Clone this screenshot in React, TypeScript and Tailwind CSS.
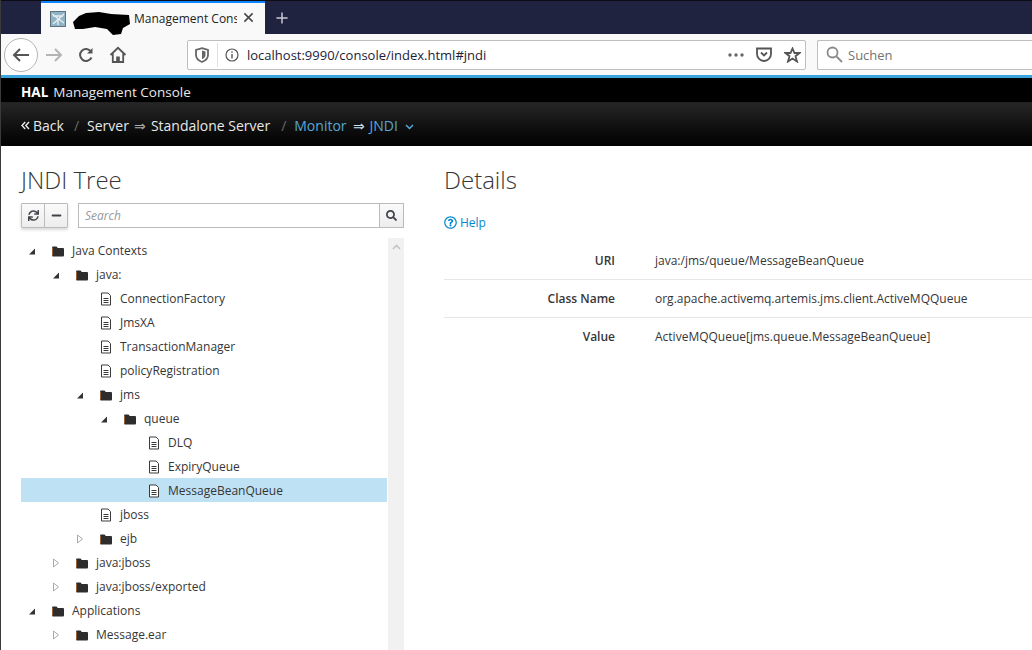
import React from "react";
import { FaSync, FaMinus, FaSearch, FaRegQuestionCircle } from "react-icons/fa";

function Tri({ open }: { open: boolean }) {
  return (
    <svg width="8" height="10" viewBox="0 0 8 10" className="shrink-0">
      {open ? <path d="M7 2.5V8.5H1Z" fill="#333" /> : <path d="M1.5 1V9L6.5 5Z" fill="#fff" stroke="#aaa" />}
    </svg>
  );
}

function Doc() {
  return (
    <svg width="12" height="14" viewBox="0 0 12 14" className="shrink-0" fill="none" stroke="#3a3a3a" strokeWidth="1">
      <path d="M1.5 1H8L10.5 3.5V13H1.5Z" fill="#fff" />
      <path d="M3.5 6.5H8.5M3.5 8.5H8.5M3.5 10.5H8.5" />
    </svg>
  );
}

function Folder() {
  return (
    <svg width="12" height="11" viewBox="0 0 12 11" className="shrink-0">
      <path d="M1 0.5H4.5L5.8 2H11Q12 2 12 3V9.5Q12 10.5 11 10.5H1Q0 10.5 0 9.5V1.5Q0 0.5 1 0.5Z" fill="#2d2d2d" />
      <path d="M0.4 1.5V9.5" stroke="#c97c3a" strokeWidth="0.8" />
    </svg>
  );
}

type Row = { t: string; d: number; k: "o" | "c" | "f"; sel?: boolean };
const rows: Row[] = [
  { t: "Java Contexts", d: 0, k: "o" },
  { t: "java:", d: 1, k: "o" },
  { t: "ConnectionFactory", d: 2, k: "f" },
  { t: "JmsXA", d: 2, k: "f" },
  { t: "TransactionManager", d: 2, k: "f" },
  { t: "policyRegistration", d: 2, k: "f" },
  { t: "jms", d: 2, k: "o" },
  { t: "queue", d: 3, k: "o" },
  { t: "DLQ", d: 4, k: "f" },
  { t: "ExpiryQueue", d: 4, k: "f" },
  { t: "MessageBeanQueue", d: 4, k: "f", sel: true },
  { t: "jboss", d: 2, k: "f" },
  { t: "ejb", d: 2, k: "c" },
  { t: "java:jboss", d: 1, k: "c" },
  { t: "java:jboss/exported", d: 1, k: "c" },
  { t: "Applications", d: 0, k: "o" },
  { t: "Message.ear", d: 1, k: "c" },
];

const pads: Record<number, string> = { 0: "pl-[7px]", 1: "pl-[31px]", 2: "pl-[55px]", 3: "pl-[79px]", 4: "pl-[103px]" };

function TreeRow({ r }: { r: Row }) {
  return (
    <div className={`h-6 pt-[2px] flex items-center shrink-0 text-[12px] text-[#363636] ${pads[r.d]} ${r.sel ? "bg-[#bee1f4]" : ""}`}>
      <span className="w-[8px] mr-[16px] flex items-center">
        {r.k === "f" ? null : <Tri open={r.k === "o"} />}
      </span>
      {r.k === "f" ? <Doc /> : <Folder />}
      <span className="ml-[8px]">{r.t}</span>
    </div>
  );
}

function Detail({ k, v, border }: { k: string; v: string; border?: boolean }) {
  return (
    <div className={`h-[38px] flex items-center text-[12px] text-[#363636] ${border ? "border-b border-[#e7e7e7]" : ""}`}>
      <div className="w-[171px] text-right font-semibold">{k}</div>
      <div className="ml-[40px] whitespace-nowrap">{v}</div>
    </div>
  );
}

export default function App() {
  return (
    <div className="w-[1032px] h-[650px] overflow-hidden bg-white border-l border-[#3a3a3a] flex flex-col font-['Open_Sans',sans-serif]">
      {/* Tab strip */}
      <div className="h-[34px] shrink-0 bg-[#202340] border-t border-[#0c0c14] flex pl-[40px]">
        <div className="w-[224px] h-full bg-[#f9f9fa] border-t-2 border-[#0a84ff] flex items-center relative pl-[9px]">
          <svg width="16" height="16" viewBox="0 0 16 16" className="shrink-0">
            <rect x="0.5" y="0.5" width="15" height="15" fill="#8fb4c6" stroke="#5d7480" />
            <path d="M2 3L14 12M14 3L3 13M8 7V14M3 5H13" stroke="#e8eef0" strokeWidth="1.4" fill="none" />
          </svg>
          <svg width="60" height="26" viewBox="0 0 60 26" className="absolute left-[30px] top-[7px]">
            <path d="M2 12L8 6L15 3L28 2L40 4L58 5L59 14L52 18L50 24L42 25L36 19L24 17L12 19L4 19Z" fill="#000" />
          </svg>
          <span className="absolute left-[93px] text-[12px] text-[#222] w-[103px] overflow-hidden whitespace-nowrap">Management Console</span>
          <svg width="11" height="11" viewBox="0 0 12 12" className="absolute left-[202px] top-[9px]" stroke="#444" strokeWidth="1.6">
            <path d="M1.5 1.5L10.5 10.5M10.5 1.5L1.5 10.5" />
          </svg>
        </div>
        <div className="ml-[11px] flex items-center">
          <svg width="12" height="12" viewBox="0 0 14 14" stroke="#c9cbd6" strokeWidth="1.7">
            <path d="M7 0.5V13.5M0.5 7H13.5" />
          </svg>
        </div>
      </div>

      {/* Browser toolbar */}
      <div className="h-[41px] shrink-0 bg-[#f9f9fa] flex items-center pl-[3px]">
        <div className="w-[34px] h-[34px] rounded-full border border-[#b5b5b5] bg-white flex items-center justify-center">
          <svg width="18" height="16" viewBox="0 0 18 16" fill="none" stroke="#555" strokeWidth="2">
            <path d="M17 8H2M8 2L2 8L8 14" />
          </svg>
        </div>
        <svg width="18" height="16" viewBox="0 0 18 16" fill="none" stroke="#b4b4b4" strokeWidth="2" className="ml-[7px]">
          <path d="M1 8H16M10 2L16 8L10 14" />
        </svg>
        <svg width="16" height="16" viewBox="0 0 16 16" fill="none" stroke="#555" strokeWidth="2" className="ml-[15px]">
          <path d="M13.5 10.5A6 6 0 1 1 13 4.5" />
          <path d="M14.5 1V6.5H9Z" fill="#555" stroke="none" />
        </svg>
        <svg width="18" height="18" viewBox="0 0 18 18" fill="none" stroke="#555" strokeWidth="1.8" className="ml-[15px]">
          <path d="M1.5 9L9 1.8L16.5 9M3.8 7.5V16H14.2V7.5" />
          <rect x="7.2" y="10.5" width="3.6" height="5.5" fill="#555" stroke="none" />
        </svg>
        <div className="ml-[60px] w-[619px] h-[30px] bg-white border border-[#bebebe] rounded-[2px] flex items-center relative">
          <svg width="14" height="16" viewBox="0 0 14 16" className="ml-[7px] shrink-0" fill="none" stroke="#666" strokeWidth="1.8">
            <path d="M7 1.2L13 3V8C13 11.5 10 13.8 7 15C4 13.8 1 11.5 1 8V3Z" />
            <path d="M7 3.5L10.5 4.5V8C10.5 10 8.8 11.4 7 12.2Z" fill="#666" stroke="none" />
          </svg>
          <div className="w-px h-[24px] bg-[#e0e0e0] ml-[8px]" />
          <svg width="14" height="14" viewBox="0 0 14 14" className="ml-[7px] shrink-0" fill="none" stroke="#555" strokeWidth="1.2">
            <circle cx="7" cy="7" r="6" />
            <path d="M7 6V10.5M7 3.2V4.8" strokeWidth="1.4" />
          </svg>
          <span className="ml-[8px] pt-[2px] text-[13px] text-[#1c1c38] whitespace-nowrap">localhost:9990/console/index.html#jndi</span>
          <span className="ml-auto flex items-center mr-[4px]">
            <svg width="16" height="4" viewBox="0 0 16 4" fill="#666">
              <circle cx="2" cy="2" r="1.7" /><circle cx="8" cy="2" r="1.7" /><circle cx="14" cy="2" r="1.7" />
            </svg>
            <svg width="16" height="15" viewBox="0 0 16 15" fill="none" stroke="#555" strokeWidth="1.8" className="ml-[12px]">
              <path d="M1 1.5H15V7A7 7 0 0 1 1 7Z" />
              <path d="M5 5.5L8 8.5L11 5.5" />
            </svg>
            <svg width="17" height="16" viewBox="0 0 17 16" fill="none" stroke="#555" strokeWidth="1.8" className="ml-[12px]">
              <path d="M8.5 1.5L10.5 6H15.5L11.5 9.2L13 14.5L8.5 11.5L4 14.5L5.5 9.2L1.5 6H6.5Z" />
            </svg>
          </span>
        </div>
        <div className="ml-[11px] flex-1 h-[30px] bg-white border border-[#bebebe] border-r-0 rounded-l-[2px] flex items-center">
          <svg width="17" height="17" viewBox="0 0 17 17" fill="none" stroke="#8a8a8a" strokeWidth="1.8" className="ml-[8px]">
            <circle cx="6.5" cy="6.5" r="5" /><path d="M10.5 10.5L16 16" />
          </svg>
          <span className="ml-[5px] pt-[2px] text-[13px] text-[#737373]">Suchen</span>
        </div>
      </div>

      {/* HAL header */}
      <div className="h-[3px] shrink-0 bg-[#39a5dc]" />
      <div className="h-[25px] shrink-0 bg-black flex items-center pl-[20px] pt-[4px] text-[13.5px] text-[#e8e8e8] border-b border-[#222]">
        <b className="font-bold text-white">HAL</b>
        <span className="ml-[5px]">Management Console</span>
      </div>
      <div className="h-[43px] shrink-0 pt-[1px] bg-gradient-to-b from-[#262626] to-[#030303] flex items-center pl-[20px] text-[14px] text-[#e8e8e8] whitespace-nowrap">
        <svg width="9" height="9" viewBox="0 0 9 9" fill="none" stroke="#e8e8e8" strokeWidth="1.4" className="mt-[1px]">
          <path d="M4.2 1L1 4.5L4.2 8M8 1L4.8 4.5L8 8" />
        </svg>
        <span className="ml-[3px]">Back</span>
        <span className="ml-[10px] mr-[8px] text-[#6a6a6a]">/</span>
        <span>Server</span>
        <span className="mx-[5px] text-[#aaa]">⇒</span>
        <span>Standalone Server</span>
        <span className="ml-[11px] mr-[8px] text-[#6a6a6a]">/</span>
        <span className="text-[#57a7d8]">Monitor</span>
        <span className="ml-[6px] mr-[5px] text-[#c8dfee]">⇒</span>
        <span className="text-[#57a7d8]">JNDI</span>
        <svg width="9" height="6" viewBox="0 0 9 6" fill="none" stroke="#57a7d8" strokeWidth="1.5" className="ml-[7px] mt-[3px]">
          <path d="M1 1L4.5 4.5L8 1" />
        </svg>
      </div>

      {/* Content */}
      <div className="flex-1 min-h-0 flex">
        <div className="w-[383px] ml-[20px] shrink-0 flex flex-col min-h-0">
          <h1 className="h-[57px] pt-[17px] text-[24px] leading-[34px] font-light text-[#363636]">JNDI Tree</h1>
          <div className="h-[25px] flex items-stretch shrink-0">
            <div className="flex w-[47px] h-[25px] border border-[#bbb] rounded-[1px] bg-gradient-to-b from-[#fafafa] to-[#ededed] shadow-[0_2px_3px_rgba(0,0,0,0.15)]">
              <span className="flex-1 flex items-center justify-center border-r border-[#bbb]"><FaSync className="text-[11px] text-[#3f4348]" /></span>
              <span className="flex-1 flex items-center justify-center"><FaMinus className="text-[11px] text-[#3f4348]" /></span>
            </div>
            <div className="ml-[10px] flex-1 flex border border-[#bbb] bg-white">
              <span className="flex-1 pl-[6px] text-[12px] italic text-[#999] flex items-center">Search</span>
              <span className="w-[24px] border-l border-[#bbb] bg-gradient-to-b from-[#fafafa] to-[#ededed] flex items-center justify-center">
                <FaSearch className="text-[11px] text-[#3f4348]" />
              </span>
            </div>
          </div>
          <div className="flex mt-[10px] flex-1 min-h-0">
            <div className="w-[366px] shrink-0 flex flex-col overflow-hidden">
              {rows.map((r) => <TreeRow key={r.t + r.d} r={r} />)}
            </div>
            <div className="w-[16px] shrink-0 ml-px bg-[#f1f1f1] flex justify-center pt-[6px]">
              <svg width="9" height="6" viewBox="0 0 9 6" fill="none" stroke="#c4c4c4" strokeWidth="1.6">
                <path d="M1 5L4.5 1.5L8 5" />
              </svg>
            </div>
          </div>
        </div>

        <div className="ml-[40px] flex-1 min-w-0 flex flex-col">
          <h1 className="h-[57px] pt-[17px] text-[24px] leading-[34px] font-light text-[#363636]">Details</h1>
          <div className="h-[25px] flex items-center text-[12px] text-[#0088ce] mt-[7px]">
            <FaRegQuestionCircle className="text-[13px]" />
            <span className="ml-[3px]">Help</span>
          </div>
          <div className="mt-[7px]">
            <Detail k="URI" v="java:/jms/queue/MessageBeanQueue" border />
            <Detail k="Class Name" v="org.apache.activemq.artemis.jms.client.ActiveMQQueue" border />
            <Detail k="Value" v="ActiveMQQueue[jms.queue.MessageBeanQueue]" />
          </div>
        </div>
      </div>
    </div>
  );
}
